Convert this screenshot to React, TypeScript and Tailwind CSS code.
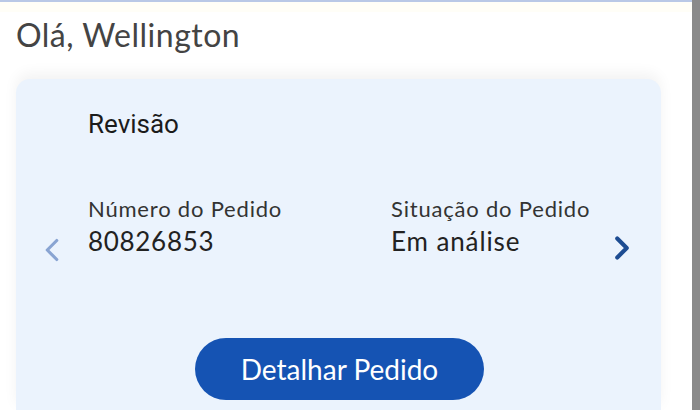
import { ChevronLeft, ChevronRight } from "lucide-react";

const body = { fontFamily: "Lato, 'Open Sans', sans-serif" };

export default function App() {
  return (
    <div className="relative flex h-[410px] w-[700px] overflow-hidden bg-white">
      <div className="flex h-full w-[692px] flex-col border-t-2 border-[#b9c8e6]">
        <div className="h-[10px] bg-[#fffef7]" />
        <h1
          className="pl-4 pt-[4px] text-[32px] leading-[38px] tracking-[0.5px] text-[#444444]"
          style={body}
        >
          Olá, Wellington
        </h1>

        <div className="ml-4 mt-[25px] w-[645px] flex-1 rounded-t-[14px] bg-[#ebf3fd] shadow-[0_-6px_14px_rgba(0,0,0,0.05)]">
          <h2
            className="pl-[72px] pt-[29px] text-[26px] font-normal leading-[32px] text-[#1b1b1b]"
            style={{ fontFamily: "Roboto, Inter, sans-serif" }}
          >
            Revisão
          </h2>

          <div className="mt-[55px] flex items-start" style={body}>
            <ChevronLeft
              className="ml-[17px] mt-[36px] h-[38px] w-[38px] text-[#89a4d2]"
              strokeWidth={2}
            />
            <div className="ml-[17px] w-[303px]">
              <p className="text-[22px] leading-[28px] tracking-[0.8px] text-[#333333]">
                Número do Pedido
              </p>
              <p className="mt-[2px] text-[26px] leading-[32px] tracking-[0.7px] text-[#222222]">
                80826853
              </p>
            </div>
            <div className="w-[212px]">
              <p className="text-[22px] leading-[28px] tracking-[0.8px] text-[#333333]">
                Situação do Pedido
              </p>
              <p className="mt-[2px] text-[26px] leading-[32px] tracking-[0.9px] text-[#222222]">
                Em análise
              </p>
            </div>
            <ChevronRight
              className="mt-[34px] h-[38px] w-[38px] text-[#1d4c92]"
              strokeWidth={2.6}
            />
          </div>

          <div className="mt-[69px] flex pl-[179px]">
            <button
              className="h-[62px] w-[289px] rounded-full bg-[#1553b3] text-[28px] text-white"
              style={body}
            >
              Detalhar Pedido
            </button>
          </div>
        </div>
      </div>
      <div className="h-full w-[8px] bg-[#8a8a8a]" />
    </div>
  );
}
